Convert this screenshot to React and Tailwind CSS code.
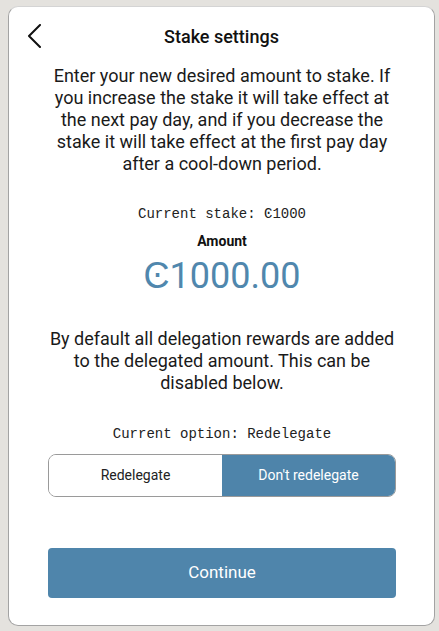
import React from 'react';

const BackIcon = () => (
  <svg width="16" height="24" viewBox="0 0 16 24" fill="none">
    <polyline points="13,1 2,12 13,23" stroke="#111" strokeWidth="2" strokeLinecap="round" strokeLinejoin="round" />
  </svg>
);

export default function App() {
  const [redelegate, setRedelegate] = React.useState(false);

  return (
    <div className="w-[439px] h-[631px] bg-[#e4e2de] pt-[6px] pl-[8px] overflow-hidden" style={{ fontFamily: 'Roboto, "Liberation Sans", sans-serif' }}>
      <div className="w-[427px] h-[620px] bg-white rounded-[10px] border border-[#a3a3a3] border-t-[#d4d4d4] flex flex-col">
        <div className="relative h-[58px] flex items-center justify-center">
          <button className="absolute left-[18px] top-[17px]" aria-label="Back">
            <BackIcon />
          </button>
          <h1 className="text-[18px] font-medium text-[#111]">Stake settings</h1>
        </div>

        <div className="pl-[39px] pr-[38px] flex flex-col items-center text-center">
          <p className="text-[18px] leading-[22px] text-[#1a1a1a]">
            Enter your new desired amount to stake. If you increase the stake it will take effect at the next pay day, and if you decrease the stake it will take effect at the first pay day after a cool-down period.
          </p>

          <div className="mt-[29px] text-[14px] leading-[20px] text-[#222]" style={{ fontFamily: '"Liberation Mono", "DejaVu Sans Mono", monospace' }}>
            Current stake: Ͼ1000
          </div>
          <div className="mt-[9px] text-[14px] leading-[16px] font-bold text-[#111]">Amount</div>
          <div className="mt-[5px] text-[36px] leading-[44px] text-[#5087ad]">Ͼ1000.00</div>

          <p className="mt-[30px] text-[18px] leading-[22px] text-[#1a1a1a]">
            By default all delegation rewards are added to the delegated amount. This can be disabled below.
          </p>

          <div className="mt-[30px] text-[14px] leading-[20px] text-[#222]" style={{ fontFamily: '"Liberation Mono", "DejaVu Sans Mono", monospace' }}>
            Current option: Redelegate
          </div>

          <div className="mt-[10px] w-full h-[43px] flex rounded-[8px] border border-[#9a9a9a] overflow-hidden text-[14px]">
            <button
              onClick={() => setRedelegate(true)}
              className={`flex-1 ${redelegate ? 'bg-[#4e84aa] text-white' : 'bg-white text-[#222]'}`}
            >
              Redelegate
            </button>
            <button
              onClick={() => setRedelegate(false)}
              className={`flex-1 ${!redelegate ? 'bg-[#4e84aa] text-white' : 'bg-white text-[#222]'}`}
            >
              Don't redelegate
            </button>
          </div>

          <button className="mt-[51px] w-full h-[50px] rounded-[4px] bg-[#4f85ab] text-white text-[17px]">
            Continue
          </button>
        </div>
      </div>
    </div>
  );
}
